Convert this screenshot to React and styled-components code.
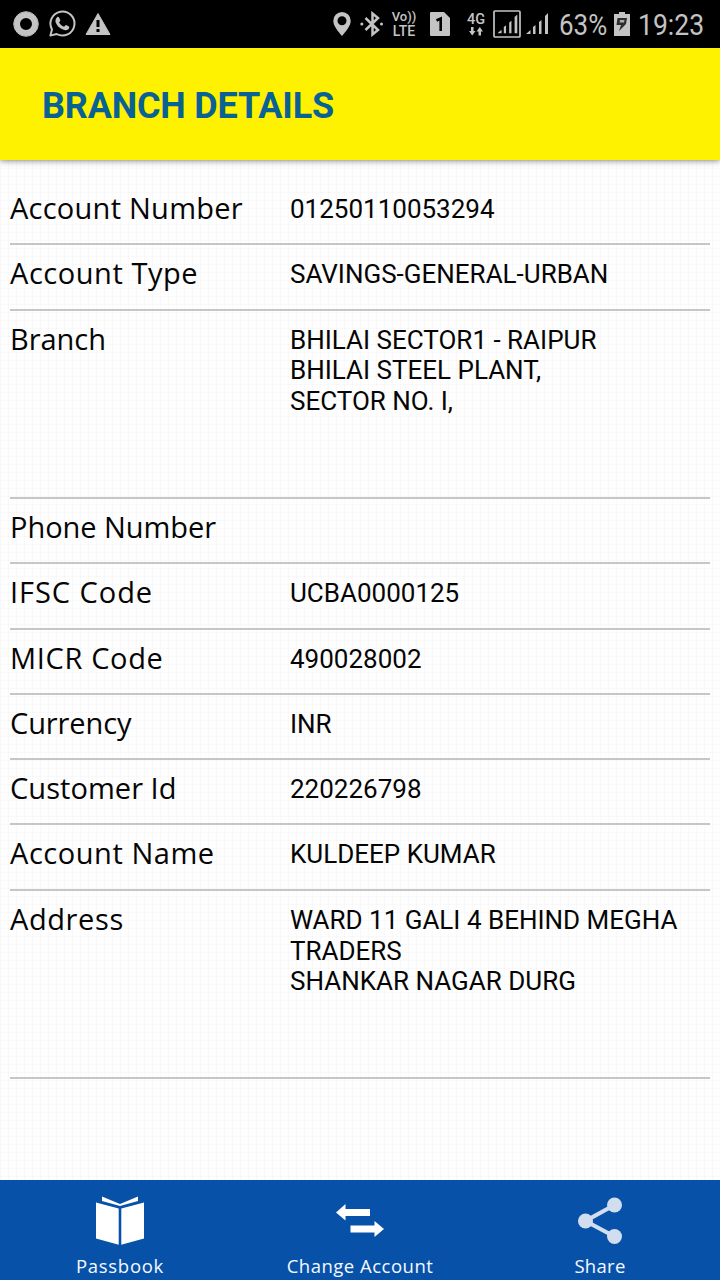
import React from "react";
import styled, { createGlobalStyle } from "styled-components";

const GlobalStyle = createGlobalStyle`
  * { box-sizing: border-box; }
  body { margin: 0; background: #fdfdfd; }
`;

const Screen = styled.div`
  width: 720px;
  height: 1280px;
  display: flex;
  flex-direction: column;
  overflow: hidden;
  font-family: Roboto, sans-serif;
  color: #050505;
`;

const StatusBar = styled.header`
  height: 48px;
  flex: none;
  display: flex;
  align-items: center;
  justify-content: space-between;
  padding: 0 15.5px 0 12px;
  background: #000;
  color: #c4c4c4;
`;

const StatusGroup = styled.div`
  display: flex;
  align-items: center;
  height: 48px;
  svg { display: block; flex: none; }
`;

const Glyph = styled.svg`
  width: ${(p) => p.$w}px;
  height: ${(p) => p.$h}px;
  margin-left: ${(p) => p.$gap || 0}px;
`;

const StatusText = styled.span`
  flex: none;
  font-size: 30px;
  line-height: 48px;
  white-space: nowrap;
  margin-left: ${(p) => p.$gap}px;
  width: ${(p) => p.$w}px;
  transform: scaleX(${(p) => p.$squeeze});
  transform-origin: 0 50%;
  padding-top: 2px;
`;

const NetworkLabel = styled.div`
  display: flex;
  flex-direction: column;
  align-items: center;
  width: ${(p) => p.$w}px;
  margin-left: ${(p) => p.$gap}px;
  font: 500 14px/14px Roboto, sans-serif;
  white-space: nowrap;
`;

const NetworkLine = styled.span`
  font-size: ${(p) => p.$size || 13}px;
`;

const TitleBar = styled.div`
  height: 112px;
  flex: none;
  display: flex;
  align-items: center;
  padding: 3px 42px 0;
  background: #fff200;
  box-shadow: 0 1px 6px rgba(0, 0, 0, 0.45);
  z-index: 1;
`;

const Title = styled.h1`
  margin: 0;
  font-size: 36px;
  font-weight: 700;
  line-height: 42px;
  letter-spacing: -0.17px;
  color: #0a6294;
`;

const Details = styled.main`
  flex: 1;
  padding: 20px 10px 0;
  background-color: #fefefe;
  background-image:
    linear-gradient(to right, rgba(0, 0, 0, 0.018) 1px, transparent 1px),
    linear-gradient(to bottom, rgba(0, 0, 0, 0.018) 1px, transparent 1px);
  background-size: 8px 8px;
`;

const Row = styled.div`
  display: grid;
  grid-template-columns: 280px 1fr;
  height: ${(p) => (p.$tall ? 188.3 : 65.32)}px;
  padding-top: 14px;
  border-bottom: 2px solid #c6c6c6;
`;

const Label = styled.div`
  font-family: "Open Sans", sans-serif;
  font-size: 29px;
  line-height: 27px;
  letter-spacing: ${(p) => p.$track}px;
  white-space: nowrap;
`;

const Value = styled.div`
  font-size: 26px;
  line-height: 30.8px;
  white-space: pre;
`;

const BottomBar = styled.nav`
  height: 100px;
  flex: none;
  display: grid;
  grid-template-columns: repeat(3, 1fr);
  background: #0752a8;
  color: #f5f9ff;
`;

const Action = styled.div`
  display: flex;
  flex-direction: column;
  align-items: center;
  padding-top: 16px;
`;

const ActionLabel = styled.span`
  margin-top: 9px;
  font: 400 18.5px/22px "Open Sans", sans-serif;
  letter-spacing: ${(p) => p.$track}px;
  white-space: nowrap;
`;

const rows = [
  { label: "Account Number", value: "01250110053294", track: 0.25 },
  { label: "Account Type", value: "SAVINGS-GENERAL-URBAN", track: 0.55 },
  { label: "Branch", value: "BHILAI SECTOR1 - RAIPUR\nBHILAI STEEL PLANT,\nSECTOR NO. I,", track: -0.05, tall: true },
  { label: "Phone Number", value: "", track: -0.05 },
  { label: "IFSC Code", value: "UCBA0000125", track: 0.95 },
  { label: "MICR Code", value: "490028002", track: 0.65 },
  { label: "Currency", value: "INR", track: -0.1 },
  { label: "Customer Id", value: "220226798", track: 0.05 },
  { label: "Account Name", value: "KULDEEP KUMAR", track: 0.55 },
  { label: "Address", value: "WARD 11 GALI 4 BEHIND MEGHA\nTRADERS\nSHANKAR NAGAR DURG", track: 0.6, tall: true },
];

function Notifications() {
  return (
    <StatusGroup>
      <Glyph $w={28} $h={28} viewBox="0 0 28 28" fill="none" stroke="currentColor">
        <circle cx="14" cy="14" r="9" strokeWidth="6" />
        <circle cx="14" cy="14" r="12.3" strokeWidth="1" />
      </Glyph>
      <Glyph $w={28} $h={28} $gap={8} viewBox="0 0 28 28">
        <path d="M2.4 25.6 4 19.4A12 12 0 1 1 8.6 24Z" fill="none" stroke="currentColor" strokeWidth="2" strokeLinejoin="round" />
        <path d="M9.1 7.2c.5-.5 1.6-.5 2 .2l1.2 2.8c.2.6-.9 1.6-1.2 2.1.9 2.1 2.7 3.6 5 4.5.7-.5 1.3-2 2-1.8l2.8 1.4c.8.4.1 2.2-.5 2.8-1.5 1.3-3.6 1.2-5.4.4-3.6-1.3-6.2-4-7.4-7.3-.5-1.9.2-3.9 1.5-5.1Z" fill="currentColor" />
      </Glyph>
      <Glyph $w={26} $h={26} $gap={9} viewBox="0 0 26 26">
        <path d="M13 2.5 25 23.5H1Z" fill="currentColor" stroke="currentColor" strokeWidth="1" strokeLinejoin="round" />
        <path d="M11.5 9h3v7h-3ZM11.5 18h3v3h-3Z" fill="#000" />
      </Glyph>
    </StatusGroup>
  );
}

function SignalBars() {
  return <path d="M0 22 4.5 18V22ZM7 22V15l2.500-2V22ZM13 22V10l2.500-2V22ZM19 22V4l3-3V22Z" fill="currentColor" />;
}

function SystemStatus() {
  return (
    <StatusGroup>
      <Glyph $w={18} $h={24} viewBox="0 0 18 24">
        <path d="M9 0a8.7 8.7 0 0 0-8.7 8.7C.3 14 5 19 9 24c4-5 8.7-10 8.7-15.3A8.7 8.7 0 0 0 9 0Zm0 4.200a4.500 4.500 0 1 1 0 9 4.500 4.500 0 0 1 0-9Z" fill="currentColor" fillRule="evenodd" />
      </Glyph>
      <Glyph $w={24} $h={26} $gap={9} viewBox="0 0 24 26">
        <path d="m5.5 7 12.5 12-5.5 4.5V2.5L18 7 5.5 19" fill="none" stroke="currentColor" strokeWidth="2.5" />
        <circle cx="1.8" cy="13" r="1.5" fill="currentColor" />
        <circle cx="21.5" cy="13" r="1.5" fill="currentColor" />
      </Glyph>
      <NetworkLabel $w={24} $gap={8}>
        <NetworkLine $size={13}>Vo))</NetworkLine>
        <NetworkLine $size={14}>LTE</NetworkLine>
      </NetworkLabel>
      <Glyph $w={20} $h={24} $gap={14} viewBox="0 0 20 24">
        <path d="M1 0H14L20 6V23a1 1 0 0 1-1 1H1a1 1 0 0 1-1-1V1a1 1 0 0 1 1-1Z" fill="currentColor" />
        <path d="m6.5 8.5 4.2-2V19" fill="none" stroke="#000" strokeWidth="2.6" />
      </Glyph>
      <NetworkLabel $w={20} $gap={16}>
        <NetworkLine $size={14.5}>4G</NetworkLine>
        <Glyph $w={14} $h={9} viewBox="0 0 14 9">
          <path d="M2 0h2.5v4H6.5L3.2 8.500 0 4H2ZM9.500 8.500H12V4.500H14L10.800 0 7.500 4.500H9.500Z" fill="currentColor" />
        </Glyph>
      </NetworkLabel>
      <Glyph $w={28} $h={28} $gap={7} viewBox="0 0 28 28">
        <rect x="1" y="1" width="26" height="26" rx="1" fill="none" stroke="currentColor" strokeWidth="1.7" />
        <g transform="translate(4.5 3.5) scale(.9)"><SignalBars /></g>
      </Glyph>
      <Glyph $w={24} $h={24} $gap={5} viewBox="0 0 24 24"><SignalBars /></Glyph>
      <StatusText $gap={9} $w={47} $squeeze={0.865}>63%</StatusText>
      <Glyph $w={16} $h={24} $gap={8} viewBox="0 0 16 24">
        <path d="M5 0h6v2h5v22H0V2h5Z" fill="currentColor" />
        <path d="M3.5 6h9.5L12 12 5 19l2-6H2.5Z" fill="#2c2c2c" />
        <path d="M6 8h4.5L10 10.500H5.500Z" fill="#aaa" />
      </Glyph>
      <StatusText $gap={7.500} $w={67} $squeeze={0.885}>19:23</StatusText>
    </StatusGroup>
  );
}

export default function App() {
  return (
    <Screen>
      <GlobalStyle />
      <StatusBar>
        <Notifications />
        <SystemStatus />
      </StatusBar>
      <TitleBar>
        <Title>BRANCH DETAILS</Title>
      </TitleBar>
      <Details>
        {rows.map((r) => (
          <Row key={r.label} $tall={r.tall}>
            <Label $track={r.track}>{r.label}</Label>
            <Value>{r.value}</Value>
          </Row>
        ))}
      </Details>
      <BottomBar>
        <Action>
          <Glyph $w={50} $h={50} viewBox="0 0 50 50" fill="#fff">
            <path d="M1 6.5 23.7 12.5V48.7L1 42.5ZM26.3 12.5 49 6.5V42.5L26.3 48.7Z" />
            <path d="M7 .5 25 8 43 .5V5L25 10 7 5Z" />
          </Glyph>
          <ActionLabel $track={0.7}>Passbook</ActionLabel>
        </Action>
        <Action>
          <Glyph $w={50} $h={50} viewBox="0 0 50 50" fill="#fff">
            <path d="M1 16.5 10.5 8V13H35V20H10.5V24.5ZM49 33 39.5 25V29.5H15.5V36.5H39.5V41Z" />
          </Glyph>
          <ActionLabel $track={0.5}>Change Account</ActionLabel>
        </Action>
        <Action>
          <Glyph $w={50} $h={50} viewBox="0 0 50 50" fill="#d2deef">
            <path d="M39.5 9 10.5 25 39.5 40.5" fill="none" stroke="#d2deef" strokeWidth="4.2" />
            <circle cx="39.5" cy="9" r="7.5" />
            <circle cx="10.5" cy="25" r="7.5" />
            <circle cx="39.5" cy="40.5" r="7.5" />
          </Glyph>
          <ActionLabel $track={0.3}>Share</ActionLabel>
        </Action>
      </BottomBar>
    </Screen>
  );
}
